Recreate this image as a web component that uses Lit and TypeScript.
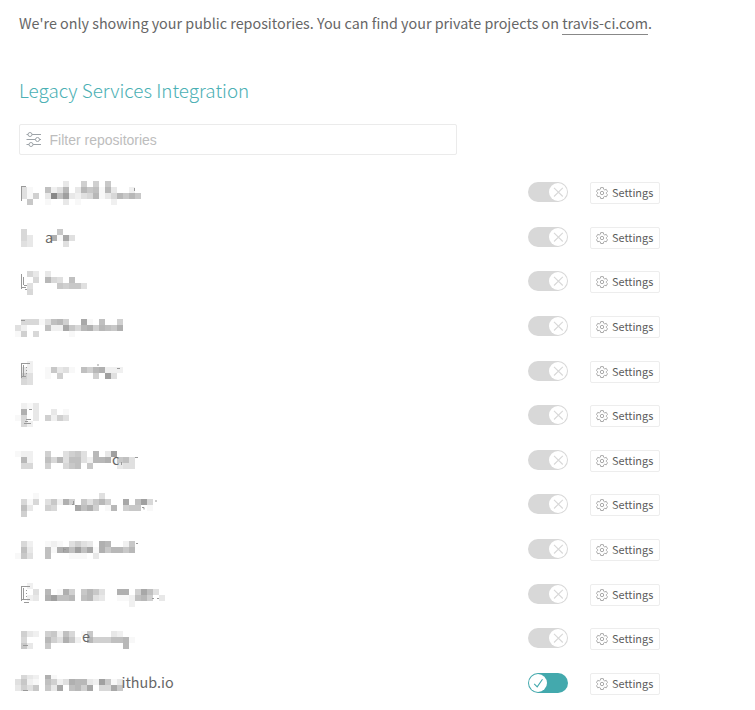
import { LitElement, html, svg, css, nothing } from "lit";
import { customElement, property } from "lit/decorators.js";

interface Repo {
  // Vertical offset of the first mosaic line inside the row
  y: number;
  // One string per mosaic line; hex digit = shade, dot = empty cell
  cells: string[];
  // Pixels cut off the top of the first mosaic line
  cut?: number;
  // Thin strokes left visible between the cells
  strokes?: string;
  // Readable remains of the name
  text?: string;
  textX?: number;
  textY?: number;
  active?: boolean;
}

const CELL = 6;

const repos: Repo[] = [
  { y: 10, cells: ["........c..9.9.8", ".be..7db6.c687e6c..d", ".be9.c073cdba6eca6868", "..8..e..c.e.....d"], strokes: "M6.500 15v15M7 15.500h4M119.500 17v3" },
  { y: 13, cells: [".a.....8", ".ac...5e4b", ".bc.....b"], text: "a", textX: 30, textY: 27 },
  { y: 11, cells: ["..ac.c", "...a.6ab.7", "..b....8988b", "..a"], strokes: "M6.500 14v15M8.500 17v8M7 27.500h4M9 25.500h3M10 29.500h2" },
  { y: 14, cells: [".aaaeb769..4e.7..9", "bd...7dd48a6596785", "e9.a.....e"], strokes: "M6 15.500h4" },
  { y: 11, cells: ["..d", ".cd..e8cbe.7965ddd", ".9b..e.9f....9.3b", ".ab"], strokes: "M6.500 13v15M8.500 15v11M7 13.500h8M11 17.500h1M11 20.500h1M11 23.500h1M7 26.500h4M82 15h2M102 18.500h3" },
  { y: 9, cells: [".dec", ".5.c..c.e", "ea.c.9d9b", ".ad"], strokes: "M11 25.500h5M9 29.500h7M10 27.500h3M14 15.500h3" },
  { y: 12, cells: ["edd..9..b98b.6.c3", ".6d..7a6b77bd665e87b", ".aa..9..a87.8....cbb"], text: "c", textX: 97, textY: 26, strokes: "M106.500 23v3M120 18.500h3" },
  { y: 10, cells: ["...e..........b", ".aea.b8d59.8b869..4.73a", ".7c..9a...4759.e6.988.e", ".9"], strokes: "M58.500 18v4M57 21.500h2M60 22.500h2M127 24.500h2v2M140 18h2" },
  { y: 13, cells: [".ad..ede.b9bc.56..d8", ".7c..7e547374e586686", "e8b..7...eee.c"], strokes: "M48.500 20v4M49 21.500h2M121 15.500h2" },
  { y: 10, cells: ["..d", "...b.6.e59.868b..55.947b", "..dc.53776.76bc..eed769.c", "...................d"], strokes: "M6.500 13v15M8.500 15v11M7 13.500h8M11 17.500h1M11 20.500h1M11 23.500h1M7 26.500h8M9 29.500h5M137 25.500h2M142 25.500h2" },
  { y: 14, cells: [".9cd.98d7a.e8...cd", ".a...69b58d.6999776e", ".8c..8............6"], text: "e", textX: 67, textY: 25, strokes: "M8 28.500h5" },
  { y: 11, cells: [".acd.5e", "b8de.79db566cd38ec", "c9b8.8c4.7694.aa48"], cut: 2, text: "ithub.io", textX: 106.5, textY: 26, strokes: "M8 28.500h5", active: true },
];

const shade = (digit: string) => {
  const v = 0x88 + parseInt(digit, 16) * 8;
  return `rgb(${v},${v},${v})`;
};

@customElement("repo-name")
class RepoName extends LitElement {
  @property({ attribute: false }) repo!: Repo;

  static styles = css`
    :host { display: block; }
    svg { display: block; overflow: visible; }
    .cell { shape-rendering: crispEdges; }
    .stroke { fill: none; stroke: #999; stroke-width: 1; }
    .name { font: 14.350px "Noto Sans CJK SC", sans-serif; fill: #666; }
  `;

  render() {
    const r = this.repo;
    const cut = r.cut ?? 0;
    return html`<svg width="170" height="44" viewBox="0 0 170 44">
      ${r.cells.map((line, row) =>
        [...line].map((c, col) => {
          if (c === ".") return nothing;
          const trim = row === 0 ? cut : 0;
          return svg`<rect class="cell" x=${col * CELL} y=${r.y + row * CELL + trim} width="6" height=${CELL - trim} fill=${shade(c)}></rect>`;
        })
      )}
      ${r.strokes ? svg`<path class="stroke" d=${r.strokes}></path>` : nothing}
      ${r.text ? svg`<text class="name" x=${r.textX!} y=${r.textY!}>${r.text}</text>` : nothing}
    </svg>`;
  }
}

@customElement("repo-toggle")
class RepoToggle extends LitElement {
  @property({ type: Boolean, reflect: true }) active = false;

  static styles = css`
    :host {
      box-sizing: border-box;
      display: flex;
      justify-content: flex-end;
      width: 40px;
      height: 20px;
      padding: 1px;
      border-radius: 10px;
      background: #d8d8d8;
      color: #d8d8d8;
    }
    :host([active]) { justify-content: flex-start; background: #43a9ad; color: #43a9ad; }
    .knob { width: 18px; height: 18px; border-radius: 50%; background: #fff; }
    svg { display: block; fill: none; stroke: currentColor; stroke-width: 1.1; }
  `;

  render() {
    return html`<span class="knob"><svg width="18" height="18" viewBox="0 0 18 18">
      <path d=${this.active ? "M5.200 9.800 8.200 12.800 13.500 5.200" : "M5 4.800 13.800 13.500M13.800 4.800 5 13.500"}></path>
    </svg></span>`;
  }
}

@customElement("app-root")
class AppRoot extends LitElement {
  static styles = css`
    :host {
      box-sizing: border-box;
      display: block;
      height: 710px;
      padding: 9px 19px 0;
      overflow: hidden;
      background: #fff;
      color: #666;
      font-family: "Noto Sans CJK SC", sans-serif;
    }
    .notice { margin: 0; height: 28px; font-size: 14.330px; line-height: 28px; white-space: nowrap; }
    .link { color: inherit; text-decoration: none; display: inline-block; line-height: 23px; border-bottom: 1px solid #888; }
    .title { margin: 38px 0 0; font-size: 18.850px; line-height: 30px; font-weight: 300; color: #4bb0b4; }
    .filter {
      box-sizing: border-box;
      display: flex;
      align-items: center;
      gap: 7.5px;
      width: 438px;
      height: 31px;
      margin-top: 19px;
      padding: 0 6px;
      border: 1px solid #ebebeb;
      border-radius: 2px;
    }
    .filter svg { fill: #fff; stroke: #9da3a8; stroke-width: 1; }
    .filter input {
      flex: 1;
      min-width: 0;
      padding: 0;
      border: 0;
      outline: 0;
      font: 14px "Liberation Sans", sans-serif;
      color: #666;
    }
    .filter input::placeholder { color: #bdbdbd; opacity: 1; }
    .list {
      display: grid;
      grid-template-rows: 45px 44px 45px 45px 44px 45px 44px 45px 45px 44px 45px 45px;
      margin: 16px 0 0 -4px;
      padding: 0;
      list-style: none;
    }
    .row { display: grid; grid-template-columns: 513px 62px 70px; align-items: start; }
    .row repo-toggle { margin-top: 11px; }
    .settings {
      box-sizing: border-box;
      display: flex;
      align-items: center;
      gap: 4px;
      width: 70px;
      height: 22px;
      margin-top: 11px;
      padding: 0 0 0 5px;
      border: 1px solid #ededed;
      border-radius: 2px;
      background: #fff;
      color: #5c5c5c;
      font: 10.900px "Noto Sans CJK SC", sans-serif;
      line-height: 20px;
    }
    .settings svg { flex: none; fill: none; stroke: #aaa; stroke-width: 1; }
    .label { padding-bottom: 2px; line-height: 18px; }
  `;

  render() {
    return html`
      <p class="notice">We're only showing your public repositories. You can find your private projects on <a class="link" href="#">travis-ci.com</a>.</p>
      <h2 class="title">Legacy Services Integration</h2>
      <label class="filter">
        <svg width="16" height="16" viewBox="0 0 16 16">
          <path d="M0.500 2.500H15M0.500 7.500H15M0.500 12.500H15"></path>
          <circle cx="4" cy="2.500" r="2"></circle>
          <circle cx="11.500" cy="7.500" r="2"></circle>
          <circle cx="5" cy="12.500" r="2"></circle>
        </svg>
        <input type="text" placeholder="Filter repositories" />
      </label>
      <ul class="list">
        ${repos.map(
          (repo) => html`<li class="row">
            <repo-name .repo=${repo}></repo-name>
            <repo-toggle ?active=${repo.active ?? false}></repo-toggle>
            <button class="settings">
              <svg width="12" height="12" viewBox="0 0 12 12">
                <path d="M4.700 0.600h2.600l.4 1.700 1 .6 1.600-.5 1.200 2.200-1.200 1.100v.8l1.200 1.100-1.200 2.200-1.600-.5-1 .6-.4 1.600H4.700l-.4-1.600-1-.6-1.600.5L.5 7.600l1.200-1.100v-.8L.5 4.600l1.200-2.200 1.600.5 1-.6z"></path>
                <circle cx="6" cy="6" r="1.700"></circle>
              </svg>
              <span class="label">Settings</span>
            </button>
          </li>`
        )}
      </ul>
    `;
  }
}
